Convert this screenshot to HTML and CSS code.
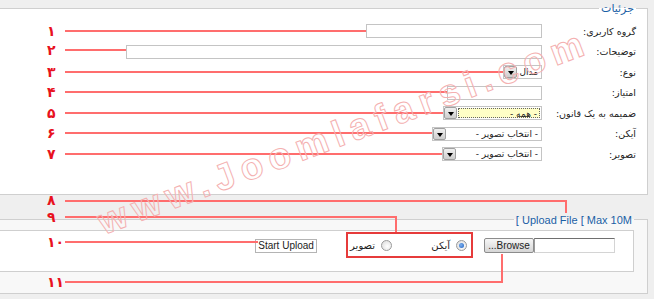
FILE: index.html
```html
<!DOCTYPE html>
<html lang="fa">
<head>
    <meta charset="UTF-8">
    <meta name="viewport" content="width=device-width, initial-scale=1.0">
    <title>جزئیات</title>
    <link rel="stylesheet" href="styles.css">
</head>
<body>
    <div class="page">
        <fieldset class="details" dir="rtl">
            <legend>جزئیات</legend>
            <div class="row"><label>گروه کاربری:</label><span class="field w176"></span></div>
            <div class="row"><label>توضیحات:</label><span class="field w416"></span></div>
            <div class="row"><label>نوع:</label><span class="combo w39"><span class="value">مدال</span><span class="arrow"></span></span></div>
            <div class="row"><label>امتیاز:</label><span class="field w95"></span></div>
            <div class="row"><label>ضمیمه به یک قانون:</label><span class="combo w99 focused"><span class="value">- همه -</span><span class="arrow"></span></span></div>
            <div class="row"><label>آیکن:</label><span class="combo w110"><span class="value">- انتخاب تصویر -</span><span class="arrow"></span></span></div>
            <div class="row"><label>تصویر:</label><span class="combo w100"><span class="value">- انتخاب تصویر -</span><span class="arrow"></span></span></div>
        </fieldset>

        <fieldset class="upload" dir="rtl">
            <legend><span dir="ltr">[ Upload File [ Max 10M</span></legend>
            <div class="upload-box">
                <div class="file">
                    <span class="file-text"></span>
                    <span class="browse" dir="ltr">...Browse</span>
                </div>
                <div class="radios">
                    <span class="opt first"><span class="radio checked"></span>آیکن</span>
                    <span class="opt"><span class="radio"></span>تصویر</span>
                </div>
                <span class="start" dir="ltr">Start Upload</span>
            </div>
        </fieldset>
    </div>

    <!-- annotation layer -->
    <svg class="notes" width="654" height="299" viewBox="0 0 654 299">
        <g class="lines">
            <polyline points="65,31 366,31"/>
            <polyline points="65,50 126,50"/>
            <polyline points="65,72 503,72"/>
            <polyline points="65,92 447,92"/>
            <polyline points="65,113 443,113"/>
            <polyline points="65,133 432,133"/>
            <polyline points="65,154 442,154"/>
            <polyline points="65,201 566,201 566,213"/>
            <polyline points="65,217 396,217 396,232"/>
            <polyline points="65,242 258,242"/>
            <polyline points="65,282 502,282 502,254"/>
        </g>
        <rect class="box" x="347" y="233" width="125" height="24"/>
        <g class="nums">
            <text x="47" y="36">۱</text>
            <text x="47" y="55">۲</text>
            <text x="47" y="77">۳</text>
            <text x="47" y="97">۴</text>
            <text x="47" y="118">۵</text>
            <text x="47" y="138">۶</text>
            <text x="47" y="159">۷</text>
            <text x="47" y="205">۸</text>
            <text x="47" y="222">۹</text>
            <text x="47" y="247">۱۰</text>
            <text x="47" y="287">۱۱</text>
        </g>
    </svg>

    <div class="watermark">www.Joomlafarsi.com</div>
</body>
</html>
```

FILE: styles.css
```css
body {
    margin: 0;
    height: 299px;
    overflow: hidden;
    position: relative;
    background-color: #efefef;
    font-family: "DejaVu Sans", sans-serif;
    font-size: 10px;
    color: #222;
}
.page {
    margin-left: -20px;
    margin-right: 6px;
}
fieldset {
    margin: 0;
    min-width: 0;
    border: 1px solid #cfcfcf;
}
.details {
    margin-top: 2px;
    padding: 6px 11px 29px 0;
    background-color: #fff;
}
.details legend {
    padding: 0 2px;
    font-size: 11px;
    line-height: 13px;
    color: #1b5fa5;
}
.row {
    display: flex;
    align-items: center;
    height: 20.5px;
}
.row label {
    display: block;
    flex: none;
    width: 94px;
    font-size: 9.5px;
    text-align: right;
    white-space: nowrap;
}
.field {
    display: block;
    box-sizing: border-box;
    height: 14px;
    border: 1px solid #c4c4c4;
    background-color: #fff;
}
.w176 { width: 176px; }
.w416 { width: 416px; }
.w95 { width: 95px; }
.w39 { width: 39px; }
.w99 { width: 99px; }
.w110 { width: 110px; }
.w100 { width: 100px; }
.combo {
    display: flex;
    box-sizing: border-box;
    height: 14px;
    border: 1px solid #c4c4c4;
    background-color: #fff;
}
.combo .value {
    flex: 1;
    padding-right: 3px;
    font-size: 9px;
    line-height: 12px;
    white-space: nowrap;
}
.combo .arrow {
    flex: none;
    width: 13px;
    position: relative;
    box-sizing: border-box;
    border: 1px solid #a0a0a0;
    border-radius: 2px;
    background: linear-gradient(#f0f0f0, #cdcdcd);
}
.combo .arrow::after {
    content: "";
    position: absolute;
    left: 3px;
    top: 4px;
    border-left: 3px solid transparent;
    border-right: 3px solid transparent;
    border-top: 4px solid #000;
}
.combo.focused .value {
    margin: 1px;
    padding-right: 2px;
    line-height: 10px;
    border: 1px dotted #666;
    background-color: #ffffc6;
}
.upload {
    margin-top: 18px;
    padding: 3px 13px 21px 0;
    background-color: #f8f8f8;
}
.upload legend {
    padding: 0 2px;
    font-family: "Liberation Sans", sans-serif;
    font-size: 11px;
    line-height: 14px;
    color: #1b5fa5;
}
.upload-box {
    display: flex;
    align-items: center;
    height: 30px;
    padding: 0 18px 10px 0;
    border: 1px solid #cfcfcf;
    background-color: #fff;
}
.file {
    display: flex;
    align-items: center;
}
.file-text {
    display: block;
    width: 81px;
    height: 15px;
    box-sizing: border-box;
    border: 1px solid #d4d4d4;
    border-top-color: #6f6f6f;
    border-left-color: #9a9a9a;
    background-color: #fff;
}
.browse {
    display: block;
    box-sizing: border-box;
    width: 50px;
    height: 15px;
    border: 1px solid #8c8c8c;
    border-radius: 2px;
    background: linear-gradient(#f6f6f6, #d6d6d6);
    font-family: "Liberation Sans", sans-serif;
    font-size: 10px;
    line-height: 13px;
    text-align: center;
}
.radios {
    display: flex;
    align-items: center;
    margin-right: 17px;
}
.opt {
    display: flex;
    align-items: center;
    gap: 6px;
}
.opt.first {
    width: 75px;
}
.radio {
    display: block;
    position: relative;
    width: 11px;
    height: 11px;
    box-sizing: border-box;
    border: 1px solid #9a9a9a;
    border-radius: 50%;
    background: radial-gradient(circle at 60% 60%, #fff, #d8d8d8);
}
.radio.checked::after {
    content: "";
    position: absolute;
    left: 2px;
    top: 2px;
    width: 5px;
    height: 5px;
    border-radius: 50%;
    background: radial-gradient(circle at 40% 40%, #7fb2f0, #1d5fbf);
}
.start {
    display: block;
    box-sizing: border-box;
    width: 62px;
    height: 14px;
    margin-right: 33px;
    border: 1px solid #b4b4b4;
    background-color: #fff;
    font-family: "Liberation Sans", sans-serif;
    font-size: 10px;
    line-height: 12px;
    text-align: center;
}
.notes {
    position: absolute;
    left: 0;
    top: 0;
    pointer-events: none;
}
.notes .lines polyline {
    fill: none;
    stroke: #ff6d6d;
    stroke-width: 2;
}
.notes .box {
    fill: none;
    stroke: #e63b3b;
    stroke-width: 2;
}
.notes .nums text {
    font-family: "DejaVu Sans", sans-serif;
    font-weight: bold;
    font-size: 14px;
    fill: #e8121e;
}
.watermark {
    position: absolute;
    left: 104px;
    top: 204px;
    font-family: "Liberation Sans", sans-serif;
    font-weight: bold;
    font-size: 37px;
    line-height: 37px;
    letter-spacing: 7px;
    white-space: nowrap;
    color: transparent;
    -webkit-text-stroke: 1px #f4b0b0;
    transform-origin: 0 32px;
    transform: rotate(-20.5deg);
    pointer-events: none;
}
```
